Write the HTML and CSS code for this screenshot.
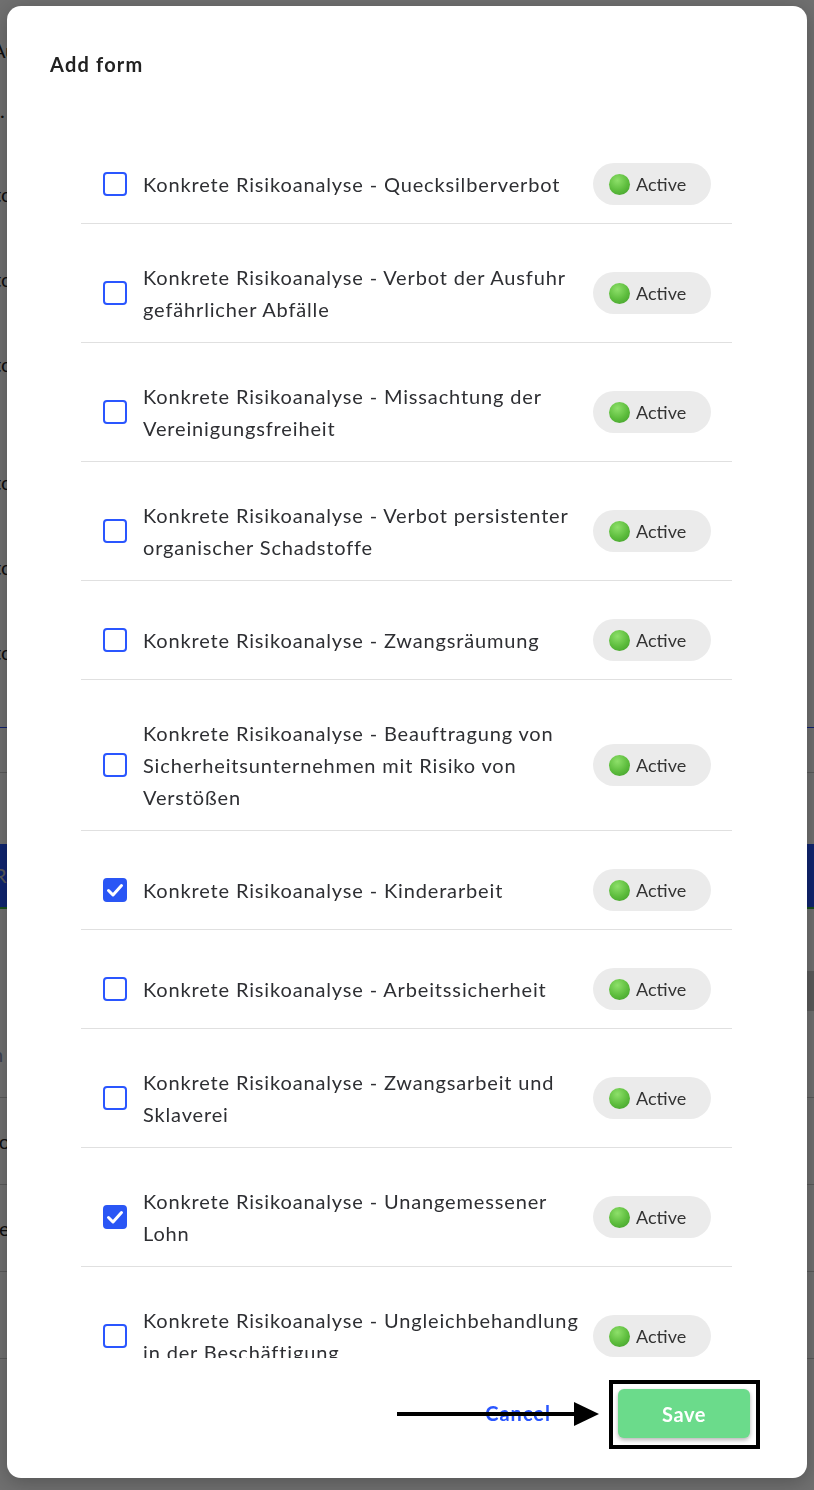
FILE: index.html
```html
<!DOCTYPE html>
<html lang="en">
<head>
    <meta charset="UTF-8">
    <meta name="viewport" content="width=device-width, initial-scale=1.0">
    <title>Add form</title>
    <link rel="stylesheet" href="styles.css">
</head>
<body>
    <!-- page behind the dialog -->
    <div class="page">
        <div class="page-head">Au</div>
        <div class="page-dot">.</div>
        <div class="page-item">to</div>
        <div class="page-item">to</div>
        <div class="page-item tall">to</div>
        <div class="page-item">to</div>
        <div class="page-item">to</div>
        <div class="page-item">to</div>
        <div class="page-rule blue"></div>
        <div class="page-rule"></div>
        <div class="page-band">R</div>
        <div class="page-block"></div>
        <div class="page-cell muted">n</div>
        <div class="page-cell">ro</div>
        <div class="page-cell">te</div>
        <div class="page-cell"></div>
    </div>

    <div class="backdrop"></div>

    <div class="modal">
        <div class="modal-header">
            <h2>Add form</h2>
        </div>

        <div class="form-list">
            <div class="form-row">
                <span class="check"></span>
                <span class="form-name">Konkrete Risikoanalyse - Quecksilberverbot</span>
                <span class="badge-cell"><span class="badge"><i class="dot"></i>Active</span></span>
            </div>
            <div class="form-row">
                <span class="check"></span>
                <span class="form-name">Konkrete Risikoanalyse - Verbot der Ausfuhr gefährlicher Abfälle</span>
                <span class="badge-cell"><span class="badge"><i class="dot"></i>Active</span></span>
            </div>
            <div class="form-row">
                <span class="check"></span>
                <span class="form-name">Konkrete Risikoanalyse - Missachtung der Vereinigungsfreiheit</span>
                <span class="badge-cell"><span class="badge"><i class="dot"></i>Active</span></span>
            </div>
            <div class="form-row">
                <span class="check"></span>
                <span class="form-name">Konkrete Risikoanalyse - Verbot persistenter organischer Schadstoffe</span>
                <span class="badge-cell"><span class="badge"><i class="dot"></i>Active</span></span>
            </div>
            <div class="form-row">
                <span class="check"></span>
                <span class="form-name">Konkrete Risikoanalyse - Zwangsräumung</span>
                <span class="badge-cell"><span class="badge"><i class="dot"></i>Active</span></span>
            </div>
            <div class="form-row">
                <span class="check"></span>
                <span class="form-name">Konkrete Risikoanalyse - Beauftragung von Sicherheitsunternehmen mit Risiko von Verstößen</span>
                <span class="badge-cell"><span class="badge"><i class="dot"></i>Active</span></span>
            </div>
            <div class="form-row">
                <span class="check checked">
                    <svg viewBox="0 0 24 24"><path d="M5.5 12.5l4.5 4.5 8.5-9.5" /></svg>
                </span>
                <span class="form-name">Konkrete Risikoanalyse - Kinderarbeit</span>
                <span class="badge-cell"><span class="badge"><i class="dot"></i>Active</span></span>
            </div>
            <div class="form-row">
                <span class="check"></span>
                <span class="form-name">Konkrete Risikoanalyse - Arbeitssicherheit</span>
                <span class="badge-cell"><span class="badge"><i class="dot"></i>Active</span></span>
            </div>
            <div class="form-row">
                <span class="check"></span>
                <span class="form-name">Konkrete Risikoanalyse - Zwangsarbeit und Sklaverei</span>
                <span class="badge-cell"><span class="badge"><i class="dot"></i>Active</span></span>
            </div>
            <div class="form-row">
                <span class="check checked">
                    <svg viewBox="0 0 24 24"><path d="M5.5 12.5l4.5 4.5 8.5-9.5" /></svg>
                </span>
                <span class="form-name">Konkrete Risikoanalyse - Unangemessener Lohn</span>
                <span class="badge-cell"><span class="badge"><i class="dot"></i>Active</span></span>
            </div>
            <div class="form-row">
                <span class="check"></span>
                <span class="form-name">Konkrete Risikoanalyse - Ungleichbehandlung in der Beschäftigung</span>
                <span class="badge-cell"><span class="badge"><i class="dot"></i>Active</span></span>
            </div>
        </div>

        <div class="modal-footer">
            <button class="btn-cancel">Cancel</button>
            <div class="save-frame">
                <button class="btn-save">Save</button>
            </div>
            <svg class="pointer" width="210" height="30" viewBox="0 0 210 30">
                <line x1="0" y1="15" x2="182" y2="15" stroke="#000" stroke-width="4" />
                <polygon points="177,3 202,15 177,27" fill="#000" />
            </svg>
        </div>
    </div>
</body>
</html>
```

FILE: styles.css
```css
body {
    margin: 0;
    padding: 0;
    background-color: #ffffff;
    font-family: Lato, "Noto Sans", Arial, sans-serif;
    color: #2e2f33;
    overflow: hidden;
}

/* page underneath */
.page {
    height: 1490px;
    font-size: 20px;
    color: #222;
}
.page-head {
    padding-top: 38px;
    height: 60px;
    text-indent: -8px;
}
.page-dot {
    height: 84px;
}
.page-item {
    height: 85px;
    text-indent: -6px;
}
.page-item.tall {
    height: 118px;
}
.page-rule {
    height: 44px;
    border-top: 1px solid #ccc;
}
.page-rule.blue {
    margin-top: 2px;
    border-top-color: #2b4cff;
}
.page-band {
    margin-top: 27px;
    height: 63px;
    line-height: 63px;
    background-color: #2454ff;
    color: #ccc;
    text-indent: -6px;
    border-bottom: 2px solid #3cb043;
}
.page-block {
    height: 40px;
    margin: 62px 0 0 auto;
    width: 40px;
    background-color: #cfcfcf;
}
.page-cell {
    height: 86px;
    line-height: 86px;
    text-indent: -8px;
    border-bottom: 1px solid #ccc;
}
.page-cell.muted {
    color: #8a93b8;
}

.backdrop {
    position: fixed;
    inset: 0;
    background-color: rgba(0, 0, 0, 0.565);
}

/* dialog */
.modal {
    position: fixed;
    top: 6px;
    left: 7px;
    width: 800px;
    height: 1472px;
    background-color: #ffffff;
    border-radius: 14px;
    box-shadow: 0 4px 20px rgba(0, 0, 0, 0.25);
    display: flex;
    flex-direction: column;
    overflow: hidden;
}
.modal-header {
    height: 119px;
    padding: 44px 43px 0;
    box-sizing: border-box;
}
.modal-header h2 {
    margin: 0;
    font-size: 20px;
    line-height: 28px;
    font-weight: bold;
    letter-spacing: 1.2px;
    color: #222;
}

.form-list {
    flex: 1;
    overflow: hidden;
    margin: 0 75px 0 74px;
}
.form-row {
    display: grid;
    grid-template-columns: 24px 1fr 118px;
    column-gap: 16px;
    align-items: center;
    padding: 37px 21px 17px 22px;
    border-bottom: 1px solid #e0e0e0;
}
.form-name {
    font-size: 20px;
    line-height: 32px;
    letter-spacing: 0.85px;
    margin-right: -6px;
}
.badge-cell {
    height: 44px;
    display: flex;
    align-items: center;
}

.check {
    width: 24px;
    height: 24px;
    box-sizing: border-box;
    border: 2.5px solid #2a56ff;
    border-radius: 4px;
    display: flex;
    align-items: center;
    justify-content: center;
}
.check.checked {
    background-color: #2a56f5;
    border-color: #2a56f5;
}
.check svg {
    width: 24px;
    height: 24px;
    flex: none;
    fill: none;
    stroke: #fff;
    stroke-width: 3;
    stroke-linecap: round;
    stroke-linejoin: round;
}

.badge {
    display: flex;
    align-items: center;
    gap: 6px;
    width: 118px;
    height: 42px;
    box-sizing: border-box;
    padding-left: 16px;
    border-radius: 21px;
    background-color: #ebebeb;
    font-size: 18px;
    color: #333;
}
.dot {
    width: 21px;
    height: 21px;
    border-radius: 50%;
    background: radial-gradient(circle at 40% 30%, #8ee06a 0%, #5cbc3c 55%, #3f9a2a 100%);
}

.modal-footer {
    position: relative;
    height: 120px;
    padding: 22px 47px 29px 0;
    box-sizing: border-box;
    display: flex;
    justify-content: flex-end;
    align-items: center;
    gap: 58px;
}
.btn-cancel {
    background: none;
    border: none;
    font-family: inherit;
    font-size: 20px;
    font-weight: bold;
    letter-spacing: 1px;
    color: #2a56ff;
    padding: 0 0 3px;
    cursor: pointer;
}
.save-frame {
    border: 4px solid #000;
    padding: 5px 6px 7px 5px;
}
.btn-save {
    display: block;
    width: 132px;
    height: 49px;
    border: none;
    border-radius: 6px;
    background-color: #6bdb8b;
    color: #fff;
    font-family: inherit;
    font-size: 20px;
    font-weight: bold;
    letter-spacing: 0.6px;
    box-shadow: 0 2px 4px rgba(0, 0, 0, 0.3);
    cursor: pointer;
}

/* annotation arrow pointing at Save */
.pointer {
    position: absolute;
    left: 390px;
    top: 41px;
}
```
